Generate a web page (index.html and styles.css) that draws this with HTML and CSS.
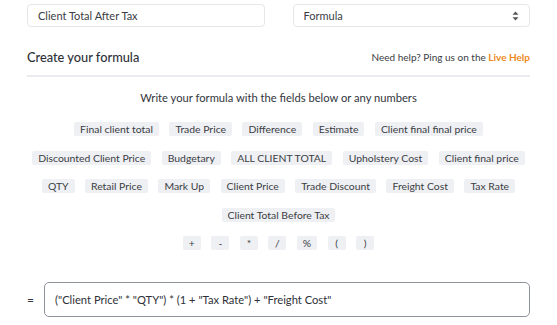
FILE: index.html
```html
<!DOCTYPE html>
<html>
<head>
<meta charset="utf-8">
<link rel="stylesheet" href="styles.css">
</head>
<body>
<div class="page">
  <div class="top-row">
    <div class="field">Client Total After Tax</div>
    <div class="field select">
      <span>Formula</span>
      <svg class="arrows" width="7" height="10" viewBox="0 0 7 10"><path d="M3.5 0.5 L6.5 3.8 H0.5 Z" fill="#555"/><path d="M3.5 9.5 L6.5 6.2 H0.5 Z" fill="#555"/></svg>
    </div>
  </div>
  <div class="head-row">
    <h2 class="title">Create your formula</h2>
    <div class="help">Need help? Ping us on the <span class="live">Live Help</span></div>
  </div>
  <p class="intro">Write your formula with the fields below or any numbers</p>
  <div class="chips">
    <div class="chip-row">
      <span class="chip">Final client total</span>
      <span class="chip">Trade Price</span>
      <span class="chip">Difference</span>
      <span class="chip">Estimate</span>
      <span class="chip">Client final final price</span>
    </div>
    <div class="chip-row">
      <span class="chip">Discounted Client Price</span>
      <span class="chip">Budgetary</span>
      <span class="chip">ALL CLIENT TOTAL</span>
      <span class="chip">Upholstery Cost</span>
      <span class="chip">Client final price</span>
    </div>
    <div class="chip-row">
      <span class="chip">QTY</span>
      <span class="chip">Retail Price</span>
      <span class="chip">Mark Up</span>
      <span class="chip">Client Price</span>
      <span class="chip">Trade Discount</span>
      <span class="chip">Freight Cost</span>
      <span class="chip">Tax Rate</span>
    </div>
    <div class="chip-row">
      <span class="chip">Client Total Before Tax</span>
    </div>
    <div class="chip-row ops">
      <span class="chip op">+</span>
      <span class="chip op">-</span>
      <span class="chip op">*</span>
      <span class="chip op">/</span>
      <span class="chip op">%</span>
      <span class="chip op">(</span>
      <span class="chip op">)</span>
    </div>
  </div>
  <div class="formula-row">
    <span class="eq">=</span>
    <div class="formula">("Client Price" * "QTY") * (1 + "Tax Rate") + "Freight Cost"</div>
  </div>
</div>
</body>
</html>
```

FILE: styles.css
```css
html, body {
  margin: 0;
  padding: 0;
  background: #ffffff;
}
body {
  font-family: Lato, "Open Sans", "Liberation Sans", sans-serif;
  color: #333740;
}
.page {
  width: 503px;
  padding: 4px 27px 0 27px;
}
.top-row {
  display: grid;
  grid-template-columns: 1fr 1fr;
  column-gap: 28px;
}
.field {
  height: 21px;
  border: 1px solid #e6e7ea;
  border-radius: 4px;
  display: flex;
  align-items: center;
  padding: 0 10px;
  font-size: 11px;
  color: #3a3d44;
}
.select {
  justify-content: space-between;
}
.arrows {
  display: block;
}
.head-row {
  margin-top: 22px;
  display: flex;
  justify-content: space-between;
  align-items: center;
  padding-bottom: 10px;
  border-bottom: 2px solid #ebebef;
}
.title {
  margin: 0;
  font-size: 12.8px;
  font-weight: 500;
  line-height: 16px;
  color: #2e3138;
}
.help {
  font-size: 10px;
  color: #3a3d44;
}
.live {
  color: #ec8a1c;
  font-weight: 700;
}
.intro {
  margin: 13px 0 0 0;
  text-align: center;
  font-size: 11.2px;
  line-height: 16px;
  color: #33363d;
}
.chips {
  margin-top: 16px;
  display: flex;
  flex-direction: column;
  row-gap: 14.5px;
}
.chip-row {
  display: flex;
  justify-content: center;
  column-gap: 10.5px;
}
.chip {
  height: 14px;
  line-height: 14px;
  padding: 0 6px;
  background: #eff0f3;
  border-radius: 2px;
  font-size: 10.4px;
  color: #3a3d44;
  white-space: nowrap;
}
.op {
  min-width: 6px;
  padding: 0 6px;
  text-align: center;
}
.formula-row {
  margin-top: 32px;
  display: flex;
  align-items: center;
  column-gap: 12px;
}
.eq {
  width: 5px;
  font-size: 12px;
  color: #333740;
}
.formula {
  flex: 1;
  height: 33px;
  border: 1.5px solid #8d929c;
  border-radius: 5px;
  display: flex;
  align-items: center;
  padding: 0 10px;
  font-size: 11.2px;
  color: #2e3138;
}
```
